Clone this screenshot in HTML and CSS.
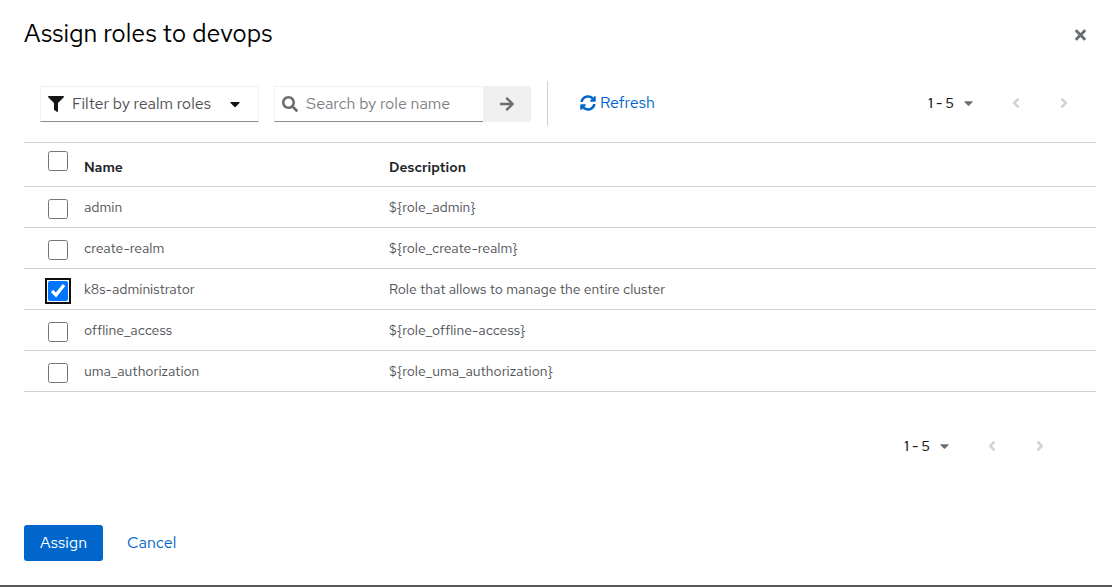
FILE: index.html
```html
<!DOCTYPE html>
<html lang="en">
<head>
<meta charset="utf-8">
<title>Assign roles to devops</title>
<link rel="stylesheet" href="styles.css">
</head>
<body>
<main class="modal" role="dialog" aria-labelledby="modal-title">
  <header class="modal-header">
    <h1 class="modal-title" id="modal-title">Assign roles to devops</h1>
    <button class="close" type="button" aria-label="Close">
      <svg width="11" height="16" viewBox="0 0 352 512" fill="currentColor"><path d="M242.72 256l100.07-100.07c12.28-12.28 12.28-32.19 0-44.48l-22.24-22.24c-12.28-12.28-32.19-12.28-44.48 0L176 189.28 75.93 89.21c-12.28-12.28-32.19-12.28-44.48 0L9.21 111.45c-12.28 12.28-12.28 32.19 0 44.48L109.28 256 9.21 356.07c-12.28 12.28-12.28 32.19 0 44.48l22.24 22.24c12.28 12.28 32.2 12.28 44.48 0L176 322.72l100.07 100.07c12.28 12.28 32.2 12.28 44.48 0l22.24-22.24c12.28-12.28 12.28-32.19 0-44.48L242.72 256z"/></svg>
    </button>
  </header>

  <div class="toolbar">
    <div class="filter">
      <svg class="filter-icon" width="16" height="16" viewBox="0 0 512 512" fill="currentColor"><path d="M487.976 0H24.028C2.71 0-8.047 25.866 7.058 40.971L192 225.941V432c0 7.831 3.821 15.17 10.237 19.662l80 55.98C298.02 518.69 320 507.493 320 487.98V225.941l184.947-184.97C520.021 25.896 509.338 0 487.976 0z"/></svg>
      <select class="filter-select" aria-label="Role type">
        <option>Filter by realm roles</option>
      </select>
      <svg class="caret" width="10" height="16" viewBox="0 0 320 512" fill="currentColor"><path d="M31.3 192h257.3c17.8 0 26.7 21.5 14.1 34.1L174.1 354.8c-7.8 7.8-20.5 7.8-28.3 0L17.2 226.1C4.6 213.5 13.5 192 31.3 192z"/></svg>
    </div>

    <form class="search">
      <label class="search-field">
        <svg width="16" height="16" viewBox="0 0 512 512" fill="currentColor"><path d="M505 442.7L405.3 343c-4.500-4.500-10.600-7-17-7H372c27.600-35.300 44-79.700 44-128C416 93.100 322.900 0 208 0S0 93.100 0 208s93.100 208 208 208c48.300 0 92.700-16.400 128-44v16.300c0 6.400 2.500 12.500 7 17l99.700 99.700c9.400 9.400 24.600 9.400 33.900 0l28.300-28.300c9.400-9.400 9.400-24.600.1-34zM208 336c-70.700 0-128-57.200-128-128 0-70.700 57.200-128 128-128 70.700 0 128 57.200 128 128 0 70.700-57.200 128-128 128z"/></svg>
        <input class="search-input" type="text" placeholder="Search by role name" aria-label="Search by role name">
      </label>
      <button class="search-button" type="button" aria-label="Search">
        <svg width="14" height="16" viewBox="0 0 448 512" fill="currentColor"><path d="M190.500 66.900l22.200-22.200c9.400-9.400 24.600-9.400 33.900 0L441 239c9.400 9.400 9.400 24.600 0 33.900L246.600 467.300c-9.400 9.400-24.600 9.400-33.900 0l-22.200-22.200c-9.500-9.500-9.300-25 .4-34.300L311.400 296H24c-13.300 0-24-10.700-24-24v-32c0-13.300 10.700-24 24-24h287.400L190.900 101.200c-9.800-9.300-10-24.800-.4-34.300z"/></svg>
      </button>
    </form>

    <div class="divider"></div>

    <button class="refresh" type="button">
      <svg width="16" height="16" viewBox="0 0 512 512" fill="currentColor"><path d="M370.720 133.280C339.458 104.008 298.888 87.962 255.848 88c-77.458.068-144.328 53.178-162.791 126.850-1.344 5.363-6.122 9.150-11.651 9.150H24.103c-7.498 0-13.194-6.807-11.807-14.176C33.933 94.924 134.813 8 256 8c66.448 0 126.791 26.136 171.315 68.685L463.030 40.970C478.149 25.851 504 36.559 504 57.941V192c0 13.255-10.745 24-24 24H345.941c-21.382 0-32.090-25.851-16.971-40.971l41.750-41.749zM32 296h134.059c21.382 0 32.090 25.851 16.971 40.971l-41.750 41.750c31.262 29.273 71.835 45.319 114.876 45.280 77.418-.070 144.315-53.144 162.787-126.849 1.344-5.363 6.122-9.150 11.651-9.150h57.304c7.498 0 13.194 6.807 11.807 14.176C478.067 417.076 377.187 504 256 504c-66.448 0-126.791-26.136-171.315-68.685L48.970 471.030C33.851 486.149 8 475.441 8 454.059V320c0-13.255 10.745-24 24-24z"/></svg>
      Refresh
    </button>

    <nav class="pager pager-top" aria-label="Pagination top">
      <button class="pager-range" type="button" aria-haspopup="listbox">1 - 5
        <svg class="pager-caret" width="9" height="14" viewBox="0 0 320 512" fill="currentColor"><path d="M31.3 192h257.3c17.8 0 26.7 21.5 14.1 34.1L174.1 354.8c-7.8 7.8-20.5 7.8-28.3 0L17.2 226.1C4.6 213.5 13.5 192 31.3 192z"/></svg>
      </button>
      <button class="pager-step" type="button" aria-label="Previous page" disabled>
        <svg width="8" height="16" viewBox="0 0 256 512" fill="currentColor"><path d="M31.700 239l136-136c9.400-9.400 24.600-9.400 33.900 0l22.600 22.600c9.400 9.400 9.400 24.600 0 33.900L127.900 256l96.400 96.400c9.400 9.400 9.400 24.600 0 33.900L201.700 409c-9.400 9.400-24.600 9.400-33.900 0l-136-136c-9.500-9.400-9.500-24.600-.1-34z"/></svg>
      </button>
      <button class="pager-step" type="button" aria-label="Next page" disabled>
        <svg width="8" height="16" viewBox="0 0 256 512" fill="currentColor"><path d="M224.300 273l-136 136c-9.400 9.400-24.600 9.400-33.900 0l-22.600-22.600c-9.400-9.400-9.400-24.600 0-33.900l96.400-96.400-96.400-96.400c-9.400-9.400-9.400-24.600 0-33.900L54.300 103c9.400-9.400 24.600-9.400 33.900 0l136 136c9.500 9.400 9.500 24.600.1 34z"/></svg>
      </button>
    </nav>
  </div>

  <table class="roles">
    <thead>
      <tr>
        <td class="check-cell"><input class="check" type="checkbox" aria-label="Select all rows"></td>
        <th class="name-cell" scope="col">Name</th>
        <th scope="col">Description</th>
      </tr>
    </thead>
    <tbody>
      <tr>
        <td class="check-cell"><input class="check" type="checkbox" aria-labelledby="role-1"></td>
        <td id="role-1">admin</td>
        <td>${role_admin}</td>
      </tr>
      <tr>
        <td class="check-cell"><input class="check" type="checkbox" aria-labelledby="role-2"></td>
        <td id="role-2">create-realm</td>
        <td>${role_create-realm}</td>
      </tr>
      <tr>
        <td class="check-cell"><input class="check" type="checkbox" aria-labelledby="role-3" checked></td>
        <td id="role-3">k8s-administrator</td>
        <td>Role that allows to manage the entire cluster</td>
      </tr>
      <tr>
        <td class="check-cell"><input class="check" type="checkbox" aria-labelledby="role-4"></td>
        <td id="role-4">offline_access</td>
        <td>${role_offline-access}</td>
      </tr>
      <tr>
        <td class="check-cell"><input class="check" type="checkbox" aria-labelledby="role-5"></td>
        <td id="role-5">uma_authorization</td>
        <td>${role_uma_authorization}</td>
      </tr>
    </tbody>
  </table>

  <nav class="pager pager-bottom" aria-label="Pagination bottom">
    <button class="pager-range" type="button" aria-haspopup="listbox">1 - 5
      <svg class="pager-caret" width="9" height="14" viewBox="0 0 320 512" fill="currentColor"><path d="M31.3 192h257.3c17.8 0 26.7 21.5 14.1 34.1L174.1 354.8c-7.8 7.8-20.5 7.8-28.3 0L17.2 226.1C4.6 213.5 13.5 192 31.3 192z"/></svg>
    </button>
    <button class="pager-step" type="button" aria-label="Previous page" disabled>
      <svg width="8" height="16" viewBox="0 0 256 512" fill="currentColor"><path d="M31.700 239l136-136c9.400-9.400 24.600-9.400 33.900 0l22.600 22.600c9.400 9.400 9.400 24.600 0 33.900L127.900 256l96.400 96.400c9.400 9.400 9.400 24.600 0 33.900L201.700 409c-9.400 9.400-24.600 9.400-33.900 0l-136-136c-9.500-9.400-9.500-24.600-.1-34z"/></svg>
    </button>
    <button class="pager-step" type="button" aria-label="Next page" disabled>
      <svg width="8" height="16" viewBox="0 0 256 512" fill="currentColor"><path d="M224.300 273l-136 136c-9.400 9.400-24.600 9.400-33.900 0l-22.600-22.600c-9.400-9.400-9.400-24.600 0-33.900l96.400-96.400-96.400-96.400c-9.400-9.400-9.400-24.600 0-33.900L54.300 103c9.400-9.400 24.600-9.400 33.900 0l136 136c9.500 9.400 9.500 24.600.1 34z"/></svg>
    </button>
  </nav>

  <footer class="actions">
    <button class="button-primary" type="button">Assign</button>
    <button class="button-link" type="button">Cancel</button>
  </footer>
</main>
</body>
</html>
```
FILE: styles.css
```css
* {
  box-sizing: border-box;
}

body {
  margin: 0;
  background: #fff;
  color: #151515;
  font-family: "Red Hat Text", Lato, "Open Sans", sans-serif;
  font-size: 16px;
  line-height: 24px;
}

button,
input,
select {
  margin: 0;
  font: inherit;
  color: inherit;
}

button {
  display: flex;
  align-items: center;
  padding: 0;
  border: 0;
  background: none;
  cursor: pointer;
}

svg {
  display: block;
  flex: none;
}

.modal {
  padding: 16px 16px 24px 24px;
  border-bottom: 2px solid #585858;
}

.modal-header {
  display: flex;
  align-items: center;
  justify-content: space-between;
  padding-right: 10px;
}

.modal-title {
  margin: 0;
  color: #000;
  font-size: 25px;
  font-weight: 400;
  line-height: 36px;
}

.close {
  padding-top: 2px;
  color: #6a6e73;
}

.toolbar {
  display: flex;
  align-items: center;
  height: 45px;
  margin: 29px 0 16px;
  padding: 0 16px;
}

.filter {
  display: grid;
  grid-template-columns: 7px 24px 1fr 10px 18px;
  align-items: center;
  width: 219px;
  height: 36px;
  border: 1px solid #f0f0f0;
  border-bottom-color: #8a8d90;
}

.filter-icon {
  grid-area: 1 / 2;
  pointer-events: none;
}

.filter-select {
  grid-area: 1 / 1 / 2 / -1;
  width: 100%;
  height: 34px;
  padding: 0 28px 0 31px;
  border: 0;
  appearance: none;
  background: none;
  color: #4f5255;
}

.caret {
  grid-area: 1 / 4;
  pointer-events: none;
}

.search {
  display: flex;
  height: 36px;
  margin-left: 15px;
  color: #6a6e73;
}

.search-field {
  display: flex;
  align-items: center;
  gap: 8px;
  width: 209px;
  padding-left: 7px;
  border: 1px solid #f0f0f0;
  border-right: 0;
  border-bottom-color: #8a8d90;
}

.search-input {
  flex: 1;
  min-width: 0;
  height: 34px;
  padding: 0;
  border: 0;
  background: none;
}

.search-input::placeholder {
  color: #7d8185;
  opacity: 1;
}

.search-button {
  justify-content: center;
  width: 48px;
  background: #f0f0f0;
}

.divider {
  align-self: stretch;
  width: 1px;
  margin: 0 32px 0 16px;
  background: #d2d2d2;
}

.refresh {
  gap: 4px;
  padding-bottom: 2px;
  color: #06c;
}

.pager {
  display: flex;
  align-items: center;
  justify-content: flex-end;
}

.pager-top {
  margin-left: auto;
  padding-bottom: 2px;
}

.pager-bottom {
  margin-top: 36px;
  padding-right: 40px;
}

.pager-range {
  gap: 10px;
  margin-right: 19px;
  font-size: 14px;
  font-weight: 500;
}

.pager-caret {
  color: #6a6e73;
}

.pager-step {
  justify-content: center;
  width: 48px;
  height: 36px;
  color: #d2d2d2;
  cursor: default;
}

.pager-step:last-child {
  margin-right: -8px;
}

.roles {
  width: 100%;
  border-collapse: separate;
  border-spacing: 0;
  border-top: 1px solid #d2d2d2;
  table-layout: fixed;
  font-size: 14px;
  line-height: 20px;
}

.roles th,
.roles td {
  padding: 10px 8px;
  border-bottom: 1px solid #d2d2d2;
  text-align: left;
  vertical-align: top;
}

.roles th {
  padding: 14px 8px 9px;
  color: #212427;
  font-weight: 600;
}

.roles tbody td {
  color: #4f5255;
}

.roles .check-cell {
  width: 52px;
  padding: 12px 8px 8px 24px;
}

.roles thead .check-cell {
  padding-top: 8px;
}

.name-cell {
  width: 305px;
}

.check {
  display: block;
  width: 20px;
  height: 20px;
}

.check:checked {
  outline: 2px solid #101010;
  outline-offset: 1px;
  border-radius: 3px;
}

.actions {
  display: flex;
  gap: 24px;
  margin-top: 61px;
}

.button-primary {
  height: 36px;
  padding: 0 16px;
  border-radius: 3px;
  background: #06c;
  color: #fff;
}

.button-link {
  color: #06c;
}
```
